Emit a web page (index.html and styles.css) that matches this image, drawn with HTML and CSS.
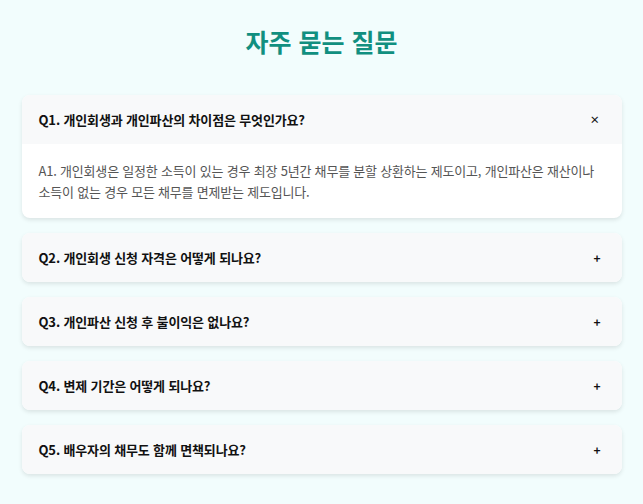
FILE: index.html
```html
<!DOCTYPE html>
<html lang="ko">
<head>
<meta charset="utf-8">
<title>자주 묻는 질문</title>
<link rel="stylesheet" href="styles.css">
</head>
<body>
<main class="faq">
  <h2 class="faq-title">자주 묻는 질문</h2>
  <div class="faq-list">
    <div class="faq-item open">
      <div class="faq-q"><span>Q1. 개인회생과 개인파산의 차이점은 무엇인가요?</span><span class="faq-icon faq-icon-close">×</span></div>
      <div class="faq-a">A1. 개인회생은 일정한 소득이 있는 경우 최장 5년간 채무를 분할 상환하는 제도이고, 개인파산은 재산이나 소득이 없는 경우 모든 채무를 면제받는 제도입니다.</div>
    </div>
    <div class="faq-item">
      <div class="faq-q"><span>Q2. 개인회생 신청 자격은 어떻게 되나요?</span><span class="faq-icon">+</span></div>
    </div>
    <div class="faq-item">
      <div class="faq-q"><span>Q3. 개인파산 신청 후 불이익은 없나요?</span><span class="faq-icon">+</span></div>
    </div>
    <div class="faq-item">
      <div class="faq-q"><span>Q4. 변제 기간은 어떻게 되나요?</span><span class="faq-icon">+</span></div>
    </div>
    <div class="faq-item">
      <div class="faq-q"><span>Q5. 배우자의 채무도 함께 면책되나요?</span><span class="faq-icon">+</span></div>
    </div>
  </div>
</main>
</body>
</html>
```
FILE: styles.css
```css
html, body {
  margin: 0;
  padding: 0;
}
body {
  background: #f2fdfd;
  font-family: "Noto Sans CJK KR", "Noto Sans", sans-serif;
  color: #111;
}
.faq {
  max-width: 600px;
  margin: 0 auto;
  padding: 24px 0 20px;
}
.faq-title {
  margin: 0 0 37px;
  text-align: center;
  font-size: 25px;
  line-height: 34px;
  font-weight: 700;
  color: #118f80;
}
.faq-list {
  display: flex;
  flex-direction: column;
  gap: 15px;
}
.faq-item {
  background: #fff;
  border-radius: 8px;
  box-shadow: 0 2px 4px rgba(0, 0, 0, 0.1);
  overflow: hidden;
}
.faq-q {
  display: flex;
  justify-content: space-between;
  align-items: center;
  height: 49px;
  box-sizing: border-box;
  padding: 0 21px 0 17px;
  background: #f8f9fa;
  font-size: 13px;
  font-weight: 700;
  letter-spacing: -0.15px;
  color: #111;
}
.faq-icon {
  font-size: 12px;
  font-weight: 700;
}
.faq-icon-close {
  font-size: 10px;
  margin-right: 1px;
}
.faq-a {
  padding: 16px 17px;
  font-size: 13px;
  line-height: 21px;
  letter-spacing: -0.2px;
  word-break: keep-all;
  color: #555;
}
```
